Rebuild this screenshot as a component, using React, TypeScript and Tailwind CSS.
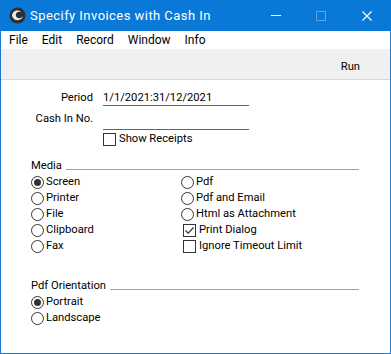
import React from "react";

const font = { fontFamily: 'Roboto, "Noto Sans", sans-serif' };

const Radio = ({ label, checked }: { label: string; checked?: boolean }) => (
  <div className="flex items-center h-4">
    <span className="w-[13px] h-[13px] rounded-full border border-[#333] bg-white flex items-center justify-center shrink-0">
      {checked && <span className="w-[7px] h-[7px] rounded-full bg-[#333]" />}
    </span>
    <span className="ml-[2px]">{label}</span>
  </div>
);

const Check = ({ label, checked }: { label: string; checked?: boolean }) => (
  <div className="flex items-center h-4">
    <span className="w-[13px] h-[13px] border border-[#333] bg-white flex items-center justify-center shrink-0">
      {checked && (
        <svg width="11" height="11" viewBox="0 0 11 11">
          <path d="M1.5 5.5 L4.2 8.2 L9.5 2.5" fill="none" stroke="#333" strokeWidth="1.2" />
        </svg>
      )}
    </span>
    <span className="ml-[3px]">{label}</span>
  </div>
);

const GroupTitle = ({ label }: { label: string }) => (
  <div className="flex items-center h-4 pl-[30px] pr-[31px]">
    <span>{label}</span>
    <span className="flex-1 h-px bg-[#a0a0a0] ml-[4px] mt-[6px]" />
  </div>
);

export default function App() {
  return (
    <div className="w-[391px] h-[354px] bg-[#1a7ad2] p-px pt-0 flex flex-col text-[11.2px] leading-4 text-black" style={font}>
      <div className="h-[31px] flex items-center text-white -mx-px pl-[9px] bg-[#0a78d7]">
        <svg width="17" height="17" viewBox="0 0 17 17">
          <circle cx="8.5" cy="8.5" r="8" fill="#2b2f36" />
          <path d="M3 9 C3 4, 9 2, 12 5 C9 4, 6 6, 7 9 C8 12, 12 12, 14 9 C13 14, 5 15, 3 9 Z" fill="#e8eef4" />
        </svg>
        <span className="ml-[4px] text-[13px] tracking-[0.45px]">Specify Invoices with Cash In</span>
        <div className="flex-1" />
        <span className="w-[10px] h-px bg-white mr-[35px]" />
        <span className="w-[10px] h-[10px] border border-[#5aa3e4] mr-[36px]" />
        <svg width="10" height="10" viewBox="0 0 10 10" className="mr-[19px]">
          <path d="M0.5 0.5 L9.5 9.5 M9.5 0.5 L0.5 9.5" stroke="white" strokeWidth="1.2" />
        </svg>
      </div>
      <div className="bg-white h-[18px] flex items-center gap-[14px] pl-[8px] text-[12px]">
        <span>File</span>
        <span>Edit</span>
        <span>Record</span>
        <span>Window</span>
        <span>Info</span>
      </div>
      <div className="bg-[#f0f0f0] h-[31px] border-b border-[#d8d8d8] flex items-center justify-end pr-[30px] pt-[6px]">
        <span>Run</span>
      </div>
      <div className="bg-white flex-1 flex flex-col pt-[10px]">
        <div className="flex items-center h-4">
          <span className="w-[92px] text-right">Period</span>
          <span className="ml-[10px] w-[146px] border-b border-[#666] h-4 leading-[15px]">1/1/2021:31/12/2021</span>
        </div>
        <div className="flex items-center h-4 mt-[5px]">
          <span className="w-[92px] text-right">Cash In No.</span>
          <span className="ml-[10px] w-[146px] border-b border-[#666] h-4 mt-[6px]" />
        </div>
        <div className="pl-[102px] mt-[4px]">
          <Check label="Show Receipts" />
        </div>
        <div className="mt-[11px]">
          <GroupTitle label="Media" />
        </div>
        <div className="grid grid-cols-[150px_1fr] pl-[30px]">
          <Radio label="Screen" checked />
          <Radio label="Pdf" />
          <Radio label="Printer" />
          <Radio label="Pdf and Email" />
          <Radio label="File" />
          <Radio label="Html as Attachment" />
          <Radio label="Clipboard" />
          <div className="pl-[2px]">
            <Check label="Print Dialog" checked />
          </div>
          <Radio label="Fax" />
          <div className="pl-[2px]">
            <Check label="Ignore Timeout Limit" />
          </div>
        </div>
        <div className="mt-[24px]">
          <GroupTitle label="Pdf Orientation" />
        </div>
        <div className="pl-[30px]">
          <Radio label="Portrait" checked />
          <Radio label="Landscape" />
        </div>
      </div>
    </div>
  );
}
